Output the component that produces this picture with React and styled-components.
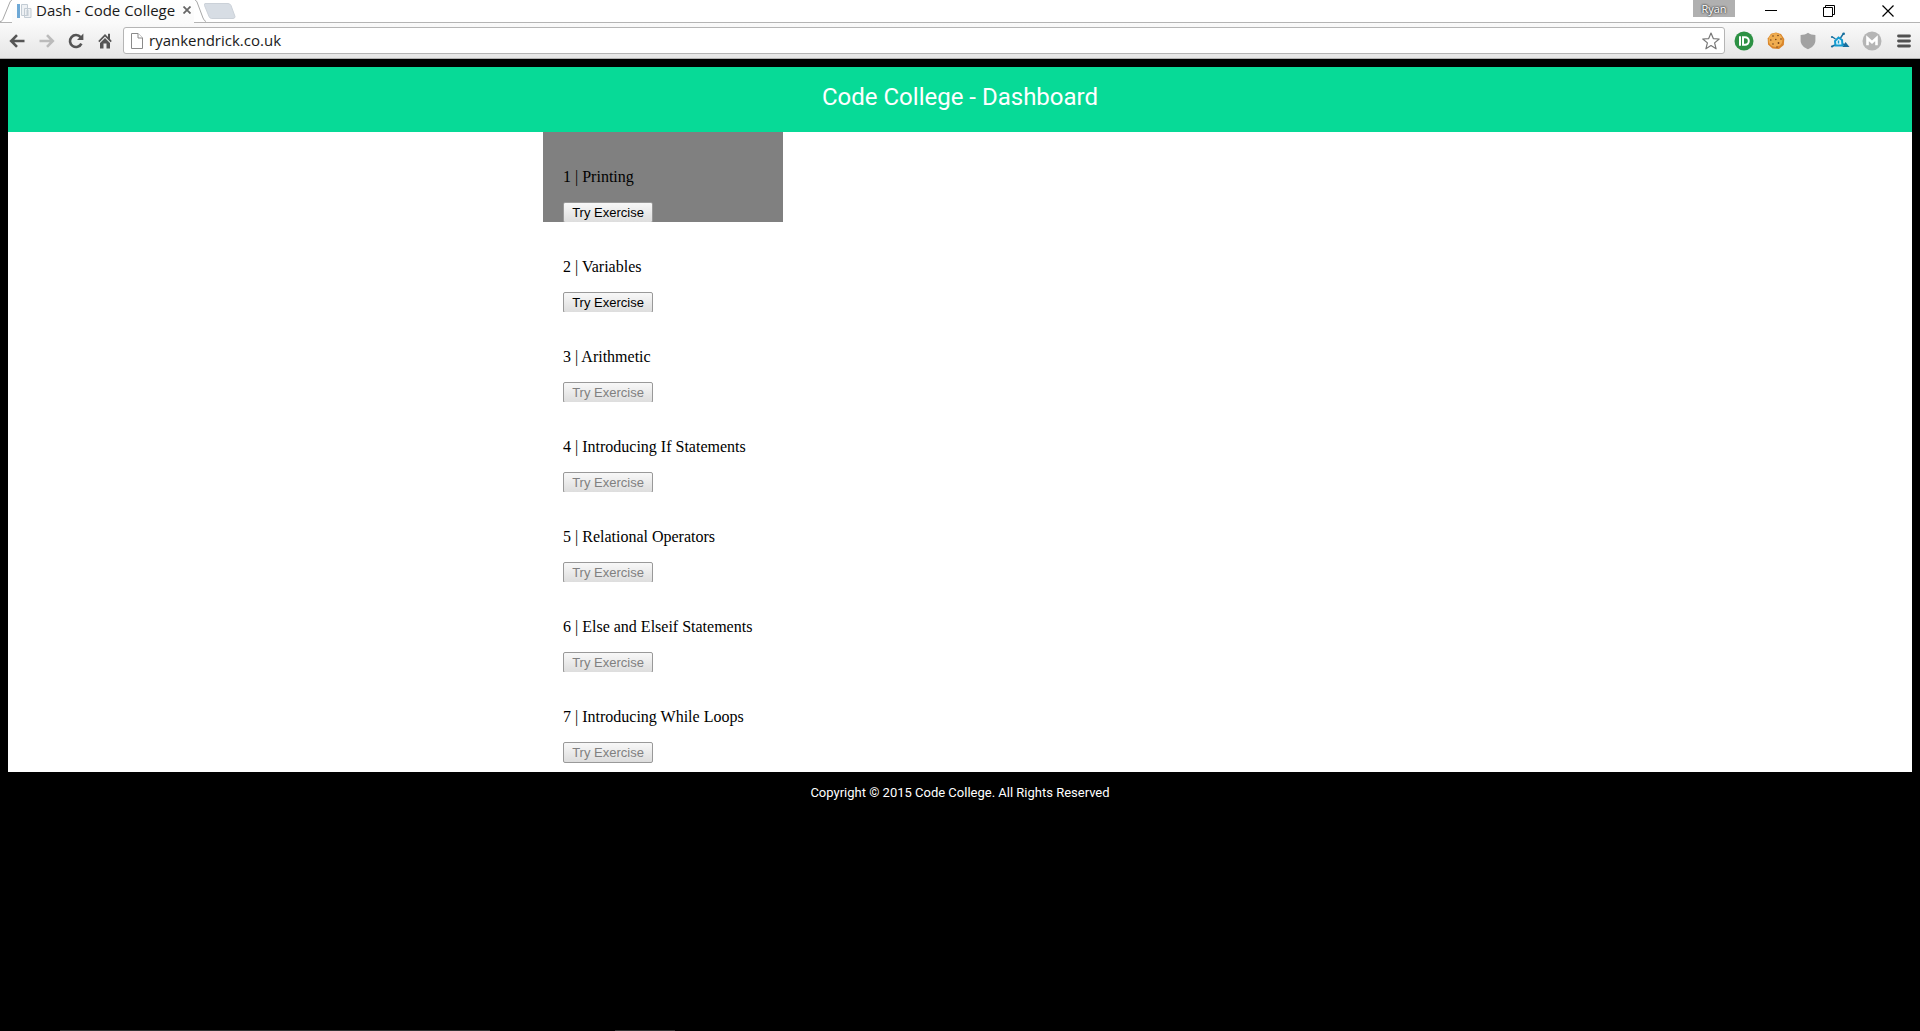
import React from 'react';
import styled, { createGlobalStyle } from 'styled-components';

const GlobalStyle = createGlobalStyle`
  *, *::before, *::after { box-sizing: border-box; }
  body { margin: 0; background: #000; }
`;

const UI_FONT = '"Open Sans", "Noto Sans", sans-serif';

const Window = styled.div`
  display: flex;
  flex-direction: column;
  min-height: 100vh;
`;

const TabStrip = styled.div`
  display: flex;
  align-items: flex-start;
  height: 22px;
  background: #fff;
`;

const Tab = styled.div`
  display: flex;
  align-items: flex-start;
  height: 22px;
  font: 15px/18px ${UI_FONT};
  color: #1a1a1a;
`;

/* Reaches over the toolbar's top line so the active tab joins the toolbar. */
const TabBody = styled.div`
  position: relative;
  display: flex;
  align-items: center;
  height: 23px;
  padding-bottom: 4px;
  background: linear-gradient(#fff, #fafafa);
`;

const TabEdge = styled.svg`
  flex: none;
  width: 12px;
  height: 22px;
`;

const Favicon = styled.svg`
  flex: none;
  width: 16px;
  height: 16px;
  margin: 2px 4px 0;
`;

const TabTitle = styled.span`
  width: 144px;
  white-space: nowrap;
`;

const BareButton = styled.button`
  display: flex;
  align-items: center;
  justify-content: center;
  flex: none;
  width: ${(p) => p.$width || 32}px;
  height: ${(p) => p.$height || 28}px;
  padding: 0;
  border: 0;
  background: transparent;
`;

const NewTabButton = styled(BareButton)`
  margin-left: -2px;
`;

const WindowControls = styled.div`
  display: flex;
  align-items: flex-start;
  margin-left: auto;
`;

const Profile = styled.button`
  width: 42px;
  height: 17px;
  margin-right: 5px;
  padding: 0;
  border: 0;
  background: #b0b0b0;
  color: #fff;
  font: 11px/14px ${UI_FONT};
  text-shadow: 0 0 2px #222, 0 0 2px #444;
`;

const Toolbar = styled.div`
  display: flex;
  align-items: center;
  height: 37px;
  padding-left: 2px;
  border-top: 1px solid #b4b4b4;
  border-bottom: 1px solid #b0b0b0;
  background: linear-gradient(#fafafa, #e6e6e6);
`;

const AddressBar = styled.div`
  display: flex;
  align-items: center;
  flex: 1;
  height: 27px;
  margin: 0 3px;
  padding-left: 7px;
  border: 1px solid #b5b5b5;
  border-radius: 3px;
  background: #fff;
`;

const AddressInput = styled.input`
  flex: 1;
  min-width: 0;
  height: 24px;
  padding: 0 0 2px;
  margin-left: 6px;
  border: 0;
  outline: 0;
  background: transparent;
  color: #1a1a1a;
  font: 15px/22px ${UI_FONT};
`;

const Page = styled.div`
  padding: 8px;
  font: 16px/18px "Liberation Serif", "Times New Roman", serif;
  color: #000;
`;

const Header = styled.header`
  height: 65px;
  padding-top: 16px;
  background: #07da97;
`;

const Heading = styled.h1`
  margin: 0;
  text-align: center;
  color: #fff;
  font: 400 24px/28px Roboto, sans-serif;
`;

const Content = styled.main`
  padding-bottom: 10px;
  background: #fff;
`;

const ExerciseList = styled.ul`
  list-style: none;
  max-width: 834px;
  margin: 0 auto;
  padding: 0;
`;

const Exercise = styled.li`
  width: 240px;
  height: 90px;
  padding: 20px 20px 0;
  background: ${(p) => (p.$active ? '#808080' : 'transparent')};
  overflow: ${(p) => (p.$last ? 'visible' : 'hidden')};
`;

const ExerciseName = styled.p`
  margin: 16px 0;
  white-space: nowrap;
`;

const TryButton = styled.button`
  display: block;
  width: 90px;
  height: 21px;
  padding: 0;
  border: 1px solid #999;
  border-radius: 2px;
  background: linear-gradient(#f8f8f8, #dddddd);
  color: #000;
  font: 13px/18px "Liberation Sans", Arial, sans-serif;

  &:disabled {
    color: #808080;
  }
`;

const Footer = styled.footer`
  padding-top: 12px;
  text-align: center;
  color: #fff;
  font: 400 13px/18px Roboto, sans-serif;
`;

const ScreenEdge = styled.div`
  display: flex;
  height: 1px;
  margin-top: auto;
  padding-left: 60px;
  gap: 125px;
`;

const EdgeSegment = styled.div`
  width: ${(p) => p.$width}px;
  background: #333;
`;

const exercises = [
  'Printing',
  'Variables',
  'Arithmetic',
  'Introducing If Statements',
  'Relational Operators',
  'Else and Elseif Statements',
  'Introducing While Loops',
];
const unlocked = 2;

const ArrowIcon = ({ color, flip }) => (
  <svg width="16" height="14" viewBox="0 0 16 14" fill="none" stroke={color} strokeWidth="2.6">
    <path d={flip ? 'M0.5 7H14M8 1.2L13.8 7L8 12.8' : 'M15.5 7H2M8 1.2L2.2 7L8 12.8'} />
  </svg>
);

const ReloadIcon = () => (
  <svg width="16" height="16" viewBox="0 0 16 16">
    <path d="M12.6 4.2A6 6 0 1 0 13.4 10.6" fill="none" stroke="#555" strokeWidth="2.6" />
    <path d="M15.4 0.6V7H9Z" fill="#555" />
  </svg>
);

const HomeIcon = () => (
  <svg width="14" height="16" viewBox="0 0 14 16" fill="#555">
    <path d="M7 1L0.2 8L1.4 9.2L7 3.6L12.6 9.2L13.8 8L12 6.1V0.8H10V4.1Z" />
    <path d="M7 5L2 10V15.5H5.5V10.5H8.5V15.5H12V10Z" />
  </svg>
);

const FileIcon = () => (
  <svg width="12" height="16" viewBox="0 0 12 16" fill="#fff" stroke="#8a8a8a">
    <path d="M0.5 0.5H7L11.5 5V15.5H0.5Z" />
    <path d="M7 0.5V5H11.5" />
  </svg>
);

const StarIcon = () => (
  <svg width="18" height="18" viewBox="0 0 18 18" fill="#fff" stroke="#777" strokeWidth="1.2" strokeLinejoin="round">
    <path d="M9 1L11.3 6.6L17.2 7L12.6 10.9L14.1 16.8L9 13.6L3.9 16.8L5.4 10.9L0.8 7L6.7 6.6Z" />
  </svg>
);

const PushIcon = () => (
  <svg width="20" height="20" viewBox="0 0 20 20">
    <circle cx="10" cy="10" r="9.5" fill="#2d9144" />
    <path d="M6 5.2V14.8" stroke="#fff" strokeWidth="2" />
    <path d="M9 6.2H11A3.8 3.8 0 0 1 11 13.8H9Z" fill="none" stroke="#fff" strokeWidth="2" />
  </svg>
);

const CookieIcon = () => (
  <svg width="18" height="18" viewBox="0 0 18 18">
    <path d="M4 1.8L9 0.6L14 2L17.3 7L16.8 13L12 17L5.5 16.6L1 12.5L0.7 6.5Z" fill="#d9852a" />
    <circle cx="8.5" cy="8" r="7" fill="#f0ad50" />
    <g fill="#714019">
      <circle cx="6" cy="4" r="0.8" /><circle cx="11" cy="3.5" r="0.8" />
      <circle cx="3.8" cy="8" r="0.8" /><circle cx="8.8" cy="7.5" r="0.8" />
      <circle cx="14" cy="7" r="0.8" /><circle cx="6" cy="12" r="0.8" />
      <circle cx="11.5" cy="11" r="0.9" /><circle cx="10" cy="15" r="0.7" />
    </g>
  </svg>
);

const ShieldIcon = () => (
  <svg width="16" height="18" viewBox="0 0 16 18">
    <path d="M8 0.8C10 2.4 12.5 3 15.4 3V8.5C15.4 12.5 12 15.8 8 17.2C4 15.8 0.6 12.5 0.6 8.5V3C3.5 3 6 2.4 8 0.8Z" fill="#a2a2a2" />
  </svg>
);

const SatelliteIcon = () => (
  <svg width="20" height="18" viewBox="0 0 20 18" stroke="#176f9e" strokeWidth="1.4" fill="none">
    <path d="M2.5 5L5.5 7M10.5 6L13.5 1.5M2 14.5L5 13M13 12L15 13" />
    <path d="M8.5 5.5L12 8L12.5 13.5H5.5L5 9Z" fill="#dff4fc" stroke="#139bd0" strokeWidth="2" />
    <path d="M8.5 8.5V11.5" stroke="#139bd0" />
    <path d="M15.5 10L19.5 15H12.5Z" fill="#176f9e" stroke="none" />
    <circle cx="2" cy="5" r="1.1" fill="#176f9e" stroke="none" />
    <circle cx="13.7" cy="1.8" r="1.3" fill="#176f9e" stroke="none" />
    <circle cx="2" cy="14.5" r="1.1" fill="#176f9e" stroke="none" />
  </svg>
);

const MailIcon = () => (
  <svg width="20" height="20" viewBox="0 0 20 20">
    <circle cx="10" cy="10" r="9.5" fill="#b5b5b5" />
    <path d="M5.5 14.2V7.2L10 11.2L14.5 7.2V14.2" fill="none" stroke="#fff" strokeWidth="2.6" />
  </svg>
);

const MenuIcon = () => (
  <svg width="14" height="14" viewBox="0 0 14 14">
    <path d="M1.5 2H12.5M1.5 7H12.5M1.5 12H12.5" stroke="#505050" strokeWidth="2.8" strokeLinecap="round" />
  </svg>
);

const extensions = [
  ['Pushbullet', PushIcon],
  ['Cookies', CookieIcon],
  ['Shield', ShieldIcon],
  ['Inspector', SatelliteIcon],
  ['Mail', MailIcon],
  ['Menu', MenuIcon],
];

function BrowserTabs() {
  return (
    <TabStrip>
      <Tab>
        <TabEdge viewBox="0 0 12 22" fill="none" stroke="#a8a8a8">
          <path d="M0 21.5C2 21.5 2.5 20 3 19L10 2Q11 0 12 0" />
        </TabEdge>
        <TabBody>
          <Favicon viewBox="0 0 16 16">
            <path d="M1 1H4V15H1Z" fill="#6fa9d6" />
            <path d="M5.5 1.5H11.5V12.5H5.5ZM8.5 5.5H15V14.5H8.5Z" fill="#eef1f4" stroke="#c3ccd4" />
            <path d="M10 8H13M10 10H13M10 12H13" stroke="#c3ccd4" />
          </Favicon>
          <TabTitle>Dash - Code College</TabTitle>
          <BareButton $width={14} $height={18} aria-label="Close tab">
            <svg width="8" height="8" viewBox="0 0 8 8" stroke="#666" strokeWidth="1.8">
              <path d="M0.5 0.5L7.5 7.5M7.5 0.5L0.5 7.5" />
            </svg>
          </BareButton>
        </TabBody>
        <TabEdge viewBox="0 0 12 22" fill="none" stroke="#a8a8a8">
          <path d="M1 0Q2 0 3 2L9 18Q10.5 21.5 12 21.5" />
        </TabEdge>
      </Tab>
      <NewTabButton $width={32} $height={22} aria-label="New tab">
        <svg width="32" height="22" viewBox="0 0 32 22">
          <path d="M1 3.5H24Q26 3.5 27 5.5L31 16.5Q31 18.5 29 18.5H7.5Q6 18.5 5 16.5L0.5 5.5Q0 3.5 1 3.5Z" fill="#d7dde4" stroke="#cbd1d8" />
        </svg>
      </NewTabButton>
      <WindowControls>
        <Profile>Ryan</Profile>
        <BareButton $width={62} $height={22} aria-label="Minimize">
          <svg width="12" height="12" viewBox="0 0 12 12" stroke="#000"><path d="M0 5.5H12" /></svg>
        </BareButton>
        <BareButton $width={54} $height={22} aria-label="Restore">
          <svg width="12" height="12" viewBox="0 0 12 12" stroke="#000" fill="none">
            <path d="M0.5 2.5H9.5V11.5H0.5ZM2.5 2.5V0.5H11.5V9.5H9.5" />
          </svg>
        </BareButton>
        <BareButton $width={64} $height={22} aria-label="Close">
          <svg width="12" height="12" viewBox="0 0 12 12" stroke="#000" strokeWidth="1.2">
            <path d="M0.5 0.5L11.5 11.5M11.5 0.5L0.5 11.5" />
          </svg>
        </BareButton>
      </WindowControls>
    </TabStrip>
  );
}

function BrowserToolbar() {
  return (
    <Toolbar>
      <BareButton $width={30} aria-label="Back"><ArrowIcon color="#555" /></BareButton>
      <BareButton $width={30} aria-label="Forward"><ArrowIcon color="#bbb" flip /></BareButton>
      <BareButton $width={28} aria-label="Reload"><ReloadIcon /></BareButton>
      <BareButton $width={30} aria-label="Home"><HomeIcon /></BareButton>
      <AddressBar>
        <FileIcon />
        <AddressInput aria-label="Address" defaultValue="ryankendrick.co.uk" />
        <BareButton $width={26} $height={24} aria-label="Bookmark"><StarIcon /></BareButton>
      </AddressBar>
      {extensions.map(([name, Icon]) => (
        <BareButton key={name} aria-label={name}><Icon /></BareButton>
      ))}
    </Toolbar>
  );
}

export default function App() {
  return (
    <Window>
      <GlobalStyle />
      <BrowserTabs />
      <BrowserToolbar />
      <Page>
        <Header>
          <Heading>Code College - Dashboard</Heading>
        </Header>
        <Content>
          <ExerciseList>
            {exercises.map((name, i) => (
              <Exercise key={name} $active={i === 0} $last={i === exercises.length - 1}>
                <ExerciseName>{i + 1} | {name}</ExerciseName>
                <TryButton disabled={i >= unlocked}>Try Exercise</TryButton>
              </Exercise>
            ))}
          </ExerciseList>
        </Content>
        <Footer>Copyright © 2015 Code College. All Rights Reserved</Footer>
      </Page>
      <ScreenEdge>
        <EdgeSegment $width={430} />
        <EdgeSegment $width={60} />
      </ScreenEdge>
    </Window>
  );
}
